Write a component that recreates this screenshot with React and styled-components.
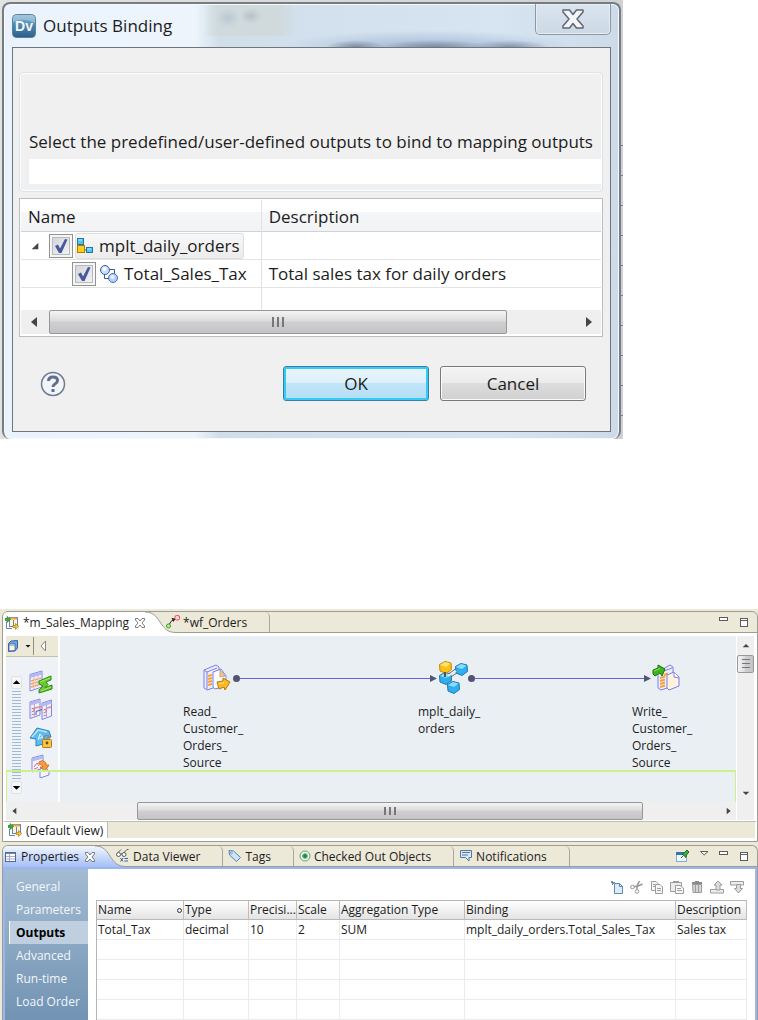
import React from 'react'
import styled, { createGlobalStyle, css } from 'styled-components'

const GlobalStyle = createGlobalStyle`
    *, *::before, *::after {
        box-sizing: border-box;
    }

    body {
        margin: 0;
        background: #ffffff;
        color: #1c1c1c;
        font-family: "Open Sans", "Noto Sans", sans-serif;
        font-size: 12px;
    }

    button, input {
        font: inherit;
        color: inherit;
        margin: 0;
    }

    button {
        padding: 0;
        border: 0;
        background: none;
    }

    svg {
        display: block;
        flex: none;
    }
`

const Page = styled.div`
    display: flex;
    flex-direction: column;
    gap: 170px;
    min-height: 100vh;
`

/* ---------- icons ---------- */

const DvIcon = () => (
    <svg width="24" height="24" viewBox="0 0 24 24" aria-hidden="true">
        <defs>
            <linearGradient id="dv" x1="0" y1="0" x2="0" y2="1">
                <stop offset="0" stopColor="#8dbbd8" />
                <stop offset="0.5" stopColor="#4a86b0" />
                <stop offset="1" stopColor="#2b5f8c" />
            </linearGradient>
        </defs>
        <rect x="0.5" y="0.5" width="23" height="23" rx="4" fill="url(#dv)" stroke="#5b8098" />
        <path d="M1 8Q12 3 23 9V4Q23 1 20 1H4Q1 1 1 4Z" fill="#b5d6ea" opacity="0.5" />
        <text x="12" y="17" textAnchor="middle" fontSize="14" fontWeight="700" fill="#f2f6f8" fontFamily="Liberation Sans, sans-serif">Dv</text>
    </svg>
)

const CrossIcon = () => (
    <svg width="24" height="22" viewBox="0 0 24 22" aria-hidden="true">
        <path d="M2 2H8.500L12 6.500 15.500 2H22V4L16 11 22 18V20H15.500L12 15.500 8.500 20H2V18L8 11 2 4Z" fill="#f5f5f5" stroke="#606577" strokeWidth="1.500" strokeLinejoin="round" />
    </svg>
)

const TabCloseIcon = () => (
    <svg width="10" height="10" viewBox="0 0 10 10" aria-hidden="true">
        <path d="M0.500 0.500H3L5 3 7 0.500H9.500V2L7 5 9.500 8V9.500H7L5 7 3 9.500H0.500V8L3 5 0.500 2Z" fill="#fff" stroke="#6c6c6c" strokeWidth="0.900" />
    </svg>
)

const MappletTreeIcon = () => (
    <svg width="16" height="16" viewBox="0 0 16 16" aria-hidden="true">
        <path d="M4 6V9M7 12H11" stroke="#555" />
        <rect x="0.500" y="0.500" width="6" height="6" fill="#4fc3f5" stroke="#1b77b0" />
        <rect x="0.500" y="7.500" width="7" height="7" fill="#ffcf1c" stroke="#b07c00" />
        <rect x="9.500" y="9.500" width="6" height="5" fill="#4fc3f5" stroke="#1b77b0" />
        <path d="M1.500 2H5M10.500 11H14" stroke="#c6ecff" />
    </svg>
)

const PortIcon = () => (
    <svg width="18" height="18" viewBox="0 0 18 18" aria-hidden="true">
        <path d="M9 4.500H14.500V9M4.500 10V13.500H9" fill="none" stroke="#3e5593" />
        <circle cx="5" cy="5" r="4.500" fill="#c9dcfb" stroke="#3c59a8" />
        <circle cx="13" cy="13" r="4.500" fill="#b3cffa" stroke="#4a6abb" />
        <circle cx="4.500" cy="4" r="2" fill="#fff" />
        <circle cx="12.500" cy="12" r="2" fill="#eef5ff" />
    </svg>
)

const HelpIcon = () => (
    <svg width="26" height="26" viewBox="0 0 26 26" aria-hidden="true">
        <circle cx="13" cy="13" r="11.500" fill="#f3f4f7" stroke="#6b7a95" strokeWidth="1.500" />
        <path d="M8.500 10Q8.500 6 13 6T17.500 9.500Q17.500 11.500 15 13 13 14.200 13 16" fill="none" stroke="#5f6f8c" strokeWidth="3" />
        <rect x="11.500" y="18" width="3" height="3" fill="#5f6f8c" />
    </svg>
)

const arrowPaths = {
    left: 'M8 1V11L2 6Z',
    right: 'M4 1V11L10 6Z',
    up: 'M1 8H11L6 3Z',
    down: 'M1 4H11L6 9Z',
    tree: 'M10 2V10H2Z'
}

const Arrow = ({ to, size = 8, fill = '#454545' }) => (
    <svg width={size} height={size} viewBox="0 0 12 12" aria-hidden="true">
        <path d={arrowPaths[to]} fill={fill} />
    </svg>
)

const MappingIcon = () => (
    <svg width="14" height="14" viewBox="0 0 14 14" aria-hidden="true">
        <rect x="4.500" y="1.500" width="8" height="9" fill="#fff6d8" stroke="#6784b8" />
        <path d="M5 2.500H12" stroke="#e7a93c" strokeWidth="2" />
        <path d="M8.500 4V10" stroke="#6784b8" />
        <path d="M1.500 6V12.500H7" fill="none" stroke="#6784b8" />
        <path d="M0 2.500H2V0.500L5.500 3.500 2 6.500V4.500H0Z" fill="#3fae2a" stroke="#217a18" strokeWidth="0.600" />
        <path d="M8 9.500H10.500V7.500L13.800 10.500 10.500 13.500V11.500H8Z" fill="#f5c431" stroke="#9c6b0b" strokeWidth="0.600" />
    </svg>
)

const WorkflowIcon = () => (
    <svg width="14" height="14" viewBox="0 0 14 14" aria-hidden="true">
        <path d="M3.500 9Q4 6 9 4" fill="none" stroke="#222" />
        <path d="M5.500 3L9.500 3.500 7.500 7Z" fill="#222" />
        <circle cx="2.500" cy="11" r="2" fill="#b8ee9c" stroke="#3d9a1f" />
        <rect x="9" y="0.500" width="4.500" height="4.500" rx="1.500" fill="#ffd3dc" stroke="#e4506a" />
    </svg>
)

const PaletteIcon = () => (
    <svg width="12" height="12" viewBox="0 0 12 12" aria-hidden="true">
        <path d="M1.500 3.500L4 1 10.500 0.500V8L8 11 1.500 11.500Z" fill="#6fa8de" stroke="#3567a8" />
        <path d="M2 4L8 3.500V10.500L2 11Z" fill="#fff8dc" stroke="#3567a8" strokeWidth="0.800" />
        <path d="M2 5H8" stroke="#5b95d3" />
    </svg>
)

const AggregatorIcon = () => (
    <svg width="24" height="24" viewBox="0 0 24 24" aria-hidden="true">
        <path d="M1 4.500L13 1V17L1 21Z" fill="#f2f3ff" stroke="#8286dc" />
        <path d="M1 6.500L13 3" stroke="#b4b8f4" strokeWidth="3" />
        <path d="M5 5V19M9 4V17" stroke="#a9adec" strokeWidth="0.700" />
        <path d="M2 11L12 8M2 14L12 11M2 17L12 14" stroke="#f7a445" strokeWidth="1.700" strokeDasharray="3 1" />
        <path d="M10 11L22 6V10L17 12 19 14.500 16 17.500 23 15V19L10 23V20L14 16 10 14Z" fill="#6cc82f" stroke="#2c8a16" />
        <path d="M11 12L21 8M12 21L22 17" stroke="#a6ea70" />
    </svg>
)

const JoinerIcon = () => (
    <svg width="24" height="24" viewBox="0 0 24 24" aria-hidden="true">
        <path d="M1 4L11 1V17L1 20.500Z" fill="#f0f1ff" stroke="#8286dc" />
        <path d="M13 5L22.500 2V18L13 21.500Z" fill="#f0f1ff" stroke="#8286dc" />
        <path d="M1 6L11 3M13 7L22.500 4" stroke="#b4b8f4" strokeWidth="3" />
        <path d="M5.500 6V18M17.500 6V19" stroke="#a9adec" />
        <path d="M2.500 11L5 10V13L2.500 14M2.500 17L5 16M14.500 12L17 11V14L14.500 15M14.500 18L17 17" fill="none" stroke="#d76d6d" />
        <path d="M6 10L13 8.500M18 10L22 9" stroke="#e78b8b" strokeWidth="1.500" />
        <path d="M7 13.500L13 11.500M7 13.500V17" stroke="#555a9c" fill="none" />
    </svg>
)

const LockIcon = () => (
    <svg width="24" height="24" viewBox="0 0 24 24" aria-hidden="true">
        <path d="M1 12L8 2 20 5 22 11 18 12V17L7 20V13Z" fill="#5bbcf0" stroke="#2f83bf" />
        <path d="M3 11L9 4 18 6" fill="none" stroke="#b8e4fb" strokeWidth="1.500" />
        <path d="M9 14L11 8 14 12M10 12H13" fill="none" stroke="#eef9ff" />
        <path d="M15 14V12Q15 9.500 17.500 9.500T20 12V14" fill="none" stroke="#8b8b8b" strokeWidth="1.500" />
        <rect x="13.500" y="13.500" width="9" height="8" rx="1" fill="#f9c44a" stroke="#b57a12" />
        <circle cx="18" cy="17" r="1.400" fill="#6d4a0a" />
    </svg>
)

const FilterIcon = () => (
    <svg width="24" height="24" viewBox="0 0 24 24" aria-hidden="true">
        <path d="M3 4L14 1V14L3 18Z" fill="#f4f5ff" stroke="#8286dc" />
        <path d="M3 6L14 3" stroke="#b4b8f4" strokeWidth="3" />
        <path d="M5 13L8 9 10 12M5 15L9 13.500" fill="none" stroke="#d76d6d" />
        <path d="M11 15L16 13 20 17V21L11 24Z" fill="#f6f7ff" stroke="#8286dc" />
        <path d="M10 8Q14 5 17 9V11H20L16 17 11 13H14Q13 10 10 10Z" fill="#f79a3b" stroke="#c76413" strokeWidth="0.800" />
    </svg>
)

const ReadIcon = () => (
    <svg width="28" height="28" viewBox="0 0 28 28" aria-hidden="true">
        <path d="M1 6L13 1 16 3V22L4 26 1 24Z" fill="#eceeff" stroke="#7b7fe4" />
        <path d="M4 8L14 4M4 8V25M1 6L4 8" fill="none" stroke="#7b7fe4" />
        <path d="M5 12L9 11M5 15L9 14M5 18L9 17M5 21L9 20" stroke="#f7a23c" strokeWidth="2" />
        <path d="M10 8L18 5 23 12V22L12 25 10 23Z" fill="#fbfbff" stroke="#7b7fe4" />
        <path d="M17 6L22 12 17 13Z" fill="#f3c98c" stroke="#b99a78" strokeWidth="0.800" />
        <path d="M14 18L20 17V14L27 18 22 26 21 23 16 25Z" fill="#fdbb22" stroke="#b87908" />
        <path d="M16 20L21 18.500" stroke="#ffe48a" />
    </svg>
)

const WriteIcon = () => (
    <svg width="28" height="28" viewBox="0 0 28 28" aria-hidden="true">
        <path d="M6 8L18 1 21 3V22L9 26 6 24Z" fill="#eceeff" stroke="#7b7fe4" />
        <path d="M12 7L20 4" stroke="#7b7fe4" />
        <path d="M8 14L13 12.500M8 17L13 15.500M8 20L13 18.500M8 23L13 21.500M12 11L16 9.500" stroke="#f7a23c" strokeWidth="2" />
        <path d="M15 11L22 8 27 13V22L17 26 15 24Z" fill="#fff3df" stroke="#7b7fe4" />
        <path d="M22 8V13L27 14" fill="#fff" stroke="#7b7fe4" />
        <path d="M1 6L6 4V1L13 5 10 12 8 9 3 12 1 10Z" fill="#3cb51e" stroke="#1f7410" />
        <path d="M2 7L8 4.500" stroke="#8be66a" />
    </svg>
)

const Cube = ({ x, y, light, mid, line }) => (
    <g transform={`translate(${x} ${y})`}>
        <path d="M0.500 3.500L6 0.500 12 2 12.500 8.500 7 12.500 1 10Z" fill={mid} stroke={line} />
        <path d="M1 4L6 1 11.500 2.500 7 6Z" fill={light} />
    </g>
)

const MappletIcon = () => (
    <svg width="32" height="36" viewBox="0 0 32 36" aria-hidden="true">
        <path d="M8 18L21 9M7 18L15 27" stroke="#777" strokeWidth="5" />
        <path d="M8 18L21 9M7 18L15 27" stroke="#ececec" strokeWidth="3" />
        <Cube x={1} y={12} light="#8adcff" mid="#2fb0ee" line="#1c78b8" />
        <Cube x={1} y={1} light="#ffe36a" mid="#fcc116" line="#c48a08" />
        <Cube x={17} y={3} light="#8adcff" mid="#2fb0ee" line="#1c78b8" />
        <Cube x={9} y={21} light="#8adcff" mid="#2fb0ee" line="#1c78b8" />
        <path d="M7 12V17" stroke="#555" strokeWidth="2" />
        <path d="M10 16L18 11" stroke="#ececec" strokeWidth="2" />
    </svg>
)

const MinimizeIcon = () => (
    <svg width="10" height="12" viewBox="0 0 10 12" aria-hidden="true">
        <rect x="0.500" y="1.500" width="8" height="3" fill="#fff" stroke="#5c5c5c" />
    </svg>
)

const MaximizeIcon = () => (
    <svg width="10" height="12" viewBox="0 0 10 12" aria-hidden="true">
        <rect x="1.500" y="2.500" width="7" height="8" fill="#fff" stroke="#5c5c5c" />
        <path d="M1 4.500H9" stroke="#5c5c5c" />
    </svg>
)

const MenuIcon = () => (
    <svg width="9" height="12" viewBox="0 0 9 12" aria-hidden="true">
        <path d="M0.500 1.500H8L4.200 5Z" fill="#fff" stroke="#5c5c5c" />
    </svg>
)

const PinIcon = () => (
    <svg width="14" height="14" viewBox="0 0 14 14" aria-hidden="true">
        <rect x="0.500" y="3.500" width="10" height="9" fill="#f1f8ff" stroke="#7fb0d0" />
        <path d="M0 4.500H8" stroke="#2f78ac" strokeWidth="3" />
        <path d="M5 9L7 7" stroke="#555" />
        <path d="M6 5L8 4 11 1 13 3 10.500 6 10 8.500Z" fill="#43a845" stroke="#1f6d25" />
    </svg>
)

const PropertiesIcon = () => (
    <svg width="12" height="12" viewBox="0 0 12 12" aria-hidden="true">
        <rect x="0.500" y="1.500" width="10" height="9" fill="#fff" stroke="#56678c" />
        <path d="M1 2.500H10" stroke="#6f86b5" />
        <path d="M1 5.500H10M1 8H10M4.500 3V10" stroke="#8d9cbf" strokeWidth="0.800" />
    </svg>
)

const GlassesIcon = () => (
    <svg width="14" height="14" viewBox="0 0 14 14" aria-hidden="true">
        <circle cx="2.500" cy="5.500" r="2" fill="#fff" stroke="#5b5b5b" />
        <circle cx="8" cy="5.500" r="2" fill="#fff" stroke="#5b5b5b" />
        <path d="M2 3.500L5 0.500M8 3.500L11 0.500H12.500M4.500 5H6" fill="none" stroke="#5b5b5b" />
        <path d="M4.500 9L7 12.500M7 9L4.500 12.500M8.500 9.500H12M8.500 12H12" stroke="#35609b" />
    </svg>
)

const TagIcon = () => (
    <svg width="14" height="14" viewBox="0 0 14 14" aria-hidden="true">
        <path d="M1 1.500L5.500 2 12.500 8.500 8.500 12.500 1.500 6Z" fill="#cfe4f8" stroke="#4b86b8" />
        <circle cx="3.300" cy="4" r="1" fill="#fff" stroke="#4b86b8" strokeWidth="0.700" />
    </svg>
)

const TargetIcon = () => (
    <svg width="12" height="14" viewBox="0 0 12 14" aria-hidden="true">
        <circle cx="6" cy="7" r="5" fill="#f1faef" stroke="#5fa774" />
        <circle cx="6" cy="7" r="2.500" fill="#2d8048" stroke="#7fc794" />
    </svg>
)

const NoteIcon = () => (
    <svg width="14" height="14" viewBox="0 0 14 14" aria-hidden="true">
        <path d="M1.500 1.500H12.500V8.500H10V12L6.500 8.500H1.500Z" fill="#dbe9f8" stroke="#55789f" />
        <path d="M3 3.500H11M3 6H9" stroke="#55789f" />
    </svg>
)

const NewIcon = () => (
    <svg width="14" height="14" viewBox="0 0 14 14" aria-hidden="true">
        <path d="M4.500 3.500H9.500L12.500 6.500V13.500H4.500Z" fill="#dcecfb" stroke="#5b88b5" />
        <path d="M9.500 3.500V6.500H12.500" fill="none" stroke="#5b88b5" />
        <path d="M2.500 1V5M1 2.500H5M1 1L4 4" stroke="#4776a4" strokeWidth="0.800" />
    </svg>
)

const CutIcon = () => (
    <svg width="14" height="14" viewBox="0 0 14 14" aria-hidden="true">
        <path d="M4 6.500H7L12.500 4M7 9.500V6L9.500 1" fill="none" stroke="#979797" strokeWidth="1.500" />
        <circle cx="2.500" cy="7" r="1.800" fill="none" stroke="#979797" />
        <circle cx="7" cy="11.500" r="1.800" fill="none" stroke="#979797" />
    </svg>
)

const CopyIcon = () => (
    <svg width="14" height="14" viewBox="0 0 14 14" aria-hidden="true">
        <path d="M1.500 1.500H6L8.500 4V10.500H1.500Z" fill="#f6f6f6" stroke="#9c9c9c" />
        <path d="M5.500 4.500H10L12.500 7V13.500H5.500Z" fill="#f6f6f6" stroke="#9c9c9c" />
        <path d="M3 4.500H5M3 6.500H5M7 8.500H11M7 10.500H11" stroke="#9c9c9c" />
    </svg>
)

const PasteIcon = () => (
    <svg width="14" height="14" viewBox="0 0 14 14" aria-hidden="true">
        <path d="M0.500 2.500H11.500V11.500H0.500Z" fill="#ececec" stroke="#9c9c9c" />
        <path d="M3 2H9" stroke="#9c9c9c" strokeWidth="2" />
        <path d="M5.500 5.500H10L13.500 8V13.500H5.500Z" fill="#f9f9f9" stroke="#9c9c9c" />
        <path d="M7 8.500H11M7 10.500H12" stroke="#9c9c9c" />
    </svg>
)

const TrashIcon = () => (
    <svg width="14" height="14" viewBox="0 0 14 14" aria-hidden="true">
        <path d="M2 3H12" stroke="#8a8a8a" strokeWidth="2" />
        <path d="M5 1.500H9" stroke="#8a8a8a" />
        <path d="M2.500 4.500H11.500V12.500H3Z" fill="#d6d6d6" stroke="#9c9c9c" />
        <path d="M5.500 5V12M8.500 5V12" stroke="#9c9c9c" />
    </svg>
)

const MoveUpIcon = () => (
    <svg width="14" height="14" viewBox="0 0 14 14" aria-hidden="true">
        <path d="M0.500 9.500H13.500V13H0.500Z" fill="#ededed" stroke="#9c9c9c" />
        <path d="M8 1L12 5H10V10H6V5H4Z" fill="#dcdcdc" stroke="#9c9c9c" />
    </svg>
)

const MoveDownIcon = () => (
    <svg width="14" height="14" viewBox="0 0 14 14" aria-hidden="true">
        <path d="M0.500 1.500H13.500V5H0.500Z" fill="#ededed" stroke="#9c9c9c" />
        <path d="M6.500 4.500H10.500V8.500H12.500L8.500 13 4.500 8.500H6.500Z" fill="#dcdcdc" stroke="#9c9c9c" />
    </svg>
)

const CheckMark = styled.svg.attrs({ width: 16, height: 18, viewBox: '0 0 16 18', 'aria-hidden': true })`
    grid-area: 1 / 1;
    pointer-events: none;
`

/* ---------- scrollbars ---------- */

const ScrollTrack = styled.div`
    display: flex;
    align-items: stretch;
    flex: none;
    height: ${({ $size }) => $size}px;
    background: #efefef;
`

const ScrollEnd = styled.span`
    display: flex;
    flex: 0 0 ${({ $length }) => $length}px;
    align-items: center;
    justify-content: center;
`

const ScrollSpace = styled.span`
    flex: ${({ $grow }) => $grow} 1 0;
`

const Thumb = styled.span`
    display: flex;
    flex: ${({ $grow }) => $grow} 1 0;
    align-items: center;
    justify-content: center;
    gap: 3px;
    border: 1px solid #979797;
    border-radius: 2px;
    background: linear-gradient(${({ $vertical }) => $vertical ? '90deg' : '180deg'}, #f4f4f4, #dcdcdc 45%, #cfcfd1 50%, #c4c4c6);
    ${({ $vertical }) => $vertical && css`flex-direction: column;`}
`

const Grip = styled.i`
    width: ${({ $vertical }) => $vertical ? 8 : 2}px;
    height: ${({ $vertical, $length = 8 }) => $vertical ? 1 : $length}px;
    background: #77777a;
`

const HScroll = ({ size, end, before, thumb, after, grip }) => (
    <ScrollTrack $size={size} aria-hidden="true">
        <ScrollEnd $length={end}><Arrow to="left" size={size > 20 ? 12 : 8} /></ScrollEnd>
        <ScrollSpace $grow={before} />
        <Thumb $grow={thumb}>
            <Grip $length={grip} /><Grip $length={grip} /><Grip $length={grip} />
        </Thumb>
        <ScrollSpace $grow={after} />
        <ScrollEnd $length={end}><Arrow to="right" size={size > 20 ? 12 : 8} /></ScrollEnd>
    </ScrollTrack>
)

/* ---------- dialog ---------- */

const Backdrop = styled.div`
    width: 100%;
    max-width: 623px;
    padding: 2px 2px 0 2px;
    overflow: hidden;
    background:
        repeating-linear-gradient(180deg, transparent 0 25px, #7479c0 25px 26px, transparent 26px 30px) right 120px / 3px 100% no-repeat,
        linear-gradient(90deg, #e2e2df, #cfd1d2);
`

const Window = styled.section`
    display: flex;
    flex-direction: column;
    height: 437px;
    padding: 0 8px 7px 8px;
    border: 2px solid #757c83;
    border-bottom: 0;
    border-radius: 8px;
    box-shadow: inset 0 0 0 1px #f5faff;
    font-size: 17px;
    background:
        radial-gradient(ellipse closest-side, #bac9d2, transparent) 212px 4px / 24px 20px no-repeat,
        radial-gradient(ellipse closest-side, #b9c2c6, transparent) 236px 4px / 22px 16px no-repeat,
        radial-gradient(ellipse closest-side, #7b8ca3, transparent) 322px 36px / 60px 14px no-repeat,
        radial-gradient(ellipse closest-side, #7b8ca3, transparent) 375px 36px / 110px 14px no-repeat,
        radial-gradient(ellipse closest-side, #8395ac, transparent) 465px 36px / 80px 14px no-repeat,
        radial-gradient(ellipse closest-side, #a4b8d4, transparent) 280px 26px / 290px 34px no-repeat,
        linear-gradient(90deg, transparent, #d0dadd 14px 76px, transparent) 200px 0 / 92px 32px no-repeat,
        linear-gradient(90deg, #eaf3fd, #edf4fc 31%, #d0deea 35%, #d7e5f3 80%, #cddbe9);
`

const TitleBar = styled.header`
    display: flex;
    align-items: flex-start;
    height: 43px;
`

const Title = styled.h1`
    display: flex;
    align-items: center;
    gap: 7px;
    flex: 1;
    margin: 0;
    height: 43px;
    font-size: 17px;
    font-weight: 400;
`

const WindowClose = styled.button`
    display: flex;
    align-items: center;
    justify-content: center;
    width: 76px;
    height: 31px;
    border: 1px solid #8d98a3;
    border-top: 0;
    border-radius: 0 0 5px 5px;
    background: linear-gradient(#dae5f0, #ccd8e4);
    box-shadow: inset 0 0 0 1px #e6eef5;
`

const Client = styled.div`
    display: flex;
    flex-direction: column;
    flex: 1;
    padding: 24px 7px 0 6px;
    border: 1px solid #70757a;
    background: #f0f0f0;
`

const Group = styled.div`
    display: flex;
    flex-direction: column;
    justify-content: flex-end;
    height: 120px;
    padding: 0 0 7px 9px;
    border: 1px solid #dbe3ea;
    border-radius: 4px;
    box-shadow: inset 0 0 0 1px #fafcfd;
`

const FieldLabel = styled.label`
    line-height: 24px;
    margin-bottom: 5px;
    white-space: nowrap;
`

const Input = styled.input`
    width: 100%;
    height: 25px;
    padding: 0 4px;
    border: 0;
    background: #ffffff;
`

const TreeBox = styled.div`
    margin-top: 6px;
    padding: 1px 1px 2px 1px;
    border: 1px solid #babdc2;
    background: #ffffff;
`

const Tree = styled.table`
    width: 100%;
    border-spacing: 0;
    table-layout: fixed;
    line-height: 22px;

    th, td {
        padding: 0 0 0 7px;
        border-bottom: 1px solid #e3e3e3;
        text-align: left;
        font-weight: 400;
        white-space: nowrap;
    }

    th {
        height: 32px;
        padding-top: 3px;
        border-bottom-color: #cfd2d6;
        background: linear-gradient(#ffffff 40%, #f4f6f8 40%, #f2f3f5);
    }

    th:first-child, td:first-child {
        border-right: 1px solid #e0e1e3;
    }

    td {
        height: 28px;
    }

    tr:last-child td {
        height: 22px;
        border-bottom: 0;
    }
`

const NameCell = styled.div`
    display: flex;
    align-items: center;
    gap: 2px;
    padding-left: ${({ $level }) => $level ? 44 : 1}px;
`

const Twisty = styled.button`
    display: flex;
    justify-content: center;
    width: 12px;
    margin-right: 6px;
`

const TreeLabel = styled.label`
    display: flex;
    align-items: center;
    gap: 6px;
    height: 26px;
    padding: 0 3px 0 1px;
    border: 1px solid ${({ $selected }) => $selected ? '#dedede' : 'transparent'};
    border-radius: 3px;
    background: ${({ $selected }) => $selected ? 'linear-gradient(#f8f8f8, #ececec)' : 'none'};
`

const CheckWrap = styled.span`
    display: inline-grid;
    place-items: center;
`

const CheckInput = styled.input`
    grid-area: 1 / 1;
    appearance: none;
    width: 24px;
    height: 24px;
    border: 1px solid #92928f;
    background: linear-gradient(135deg, #cdd1d8, #f6f7f8);
    box-shadow: inset 0 0 0 2px #f6f6f6, inset 0 0 0 3px #b6babf;
`

const DialogFooter = styled.footer`
    display: flex;
    align-items: center;
    gap: 11px;
    margin: 29px 17px 0 21px;
`

const HelpButton = styled.button`
    margin-right: auto;
`

const DialogButton = styled.button`
    width: 146px;
    height: 35px;
    border: 1px solid ${({ $primary }) => $primary ? '#3b7fa3' : '#77797b'};
    border-radius: 3px;
    background: ${({ $primary }) => $primary
        ? 'linear-gradient(#e9f6fd, #dcf0fc 48%, #c1e5f9 50%, #b3def5)'
        : 'linear-gradient(#f3f3f3, #ebebeb 48%, #dddddd 50%, #d0d0d0)'};
    box-shadow: inset 0 0 0 ${({ $primary }) => $primary ? '2px #35cbf7' : '1px #fafafa'};
`

const TreeCheck = ({ id }) => (
    <CheckWrap>
        <CheckInput type="checkbox" id={id} defaultChecked />
        <CheckMark>
            <path d="M2 9L5 7.500 7 11.500 12 2 14.500 2.500 8.500 16H6Z" fill="#47589b" />
        </CheckMark>
    </CheckWrap>
)

const OutputsDialog = () => (
    <Backdrop>
        <Window role="dialog" aria-labelledby="dialog-title">
            <TitleBar>
                <Title id="dialog-title"><DvIcon />Outputs Binding</Title>
                <WindowClose aria-label="Close"><CrossIcon /></WindowClose>
            </TitleBar>
            <Client>
                <Group>
                    <FieldLabel htmlFor="filter">Select the predefined/user-defined outputs to bind to mapping outputs</FieldLabel>
                    <Input id="filter" type="text" />
                </Group>
                <TreeBox>
                    <Tree>
                        <colgroup>
                            <col style={{ width: '41.5%' }} />
                            <col />
                        </colgroup>
                        <thead>
                            <tr><th>Name</th><th>Description</th></tr>
                        </thead>
                        <tbody>
                            <tr>
                                <td>
                                    <NameCell>
                                        <Twisty aria-label="Collapse"><Arrow to="tree" size={10} /></Twisty>
                                        <TreeCheck id="mapplet" />
                                        <TreeLabel htmlFor="mapplet" $selected><MappletTreeIcon />mplt_daily_orders</TreeLabel>
                                    </NameCell>
                                </td>
                                <td />
                            </tr>
                            <tr>
                                <td>
                                    <NameCell $level={1}>
                                        <TreeCheck id="tax" />
                                        <TreeLabel htmlFor="tax"><PortIcon />Total_Sales_Tax</TreeLabel>
                                    </NameCell>
                                </td>
                                <td>Total sales tax for daily orders</td>
                            </tr>
                            <tr><td /><td /></tr>
                        </tbody>
                    </Tree>
                    <HScroll size={24} end={27} before={1} thumb={459} after={68} grip={10} />
                </TreeBox>
                <DialogFooter>
                    <HelpButton aria-label="Help"><HelpIcon /></HelpButton>
                    <DialogButton $primary>OK</DialogButton>
                    <DialogButton>Cancel</DialogButton>
                </DialogFooter>
            </Client>
        </Window>
    </Backdrop>
)

/* ---------- workbench ---------- */

const Workbench = styled.main`
    display: flex;
    flex-direction: column;
    flex: 1;
    gap: 3px;
    padding: 2px 0 0 2px;
    background: #ece9d8;
`

const Panel = styled.section`
    display: flex;
    flex-direction: column;
    border: 1px solid #9d9d96;
    border-radius: 6px 6px 0 0;
    ${({ $fill }) => $fill && css`flex: 1; border-bottom: 0;`}
`

const TabBar = styled.div`
    display: flex;
    align-items: stretch;
    height: 21px;
    border-bottom: 1px solid #9d9d96;
`

const Tab = styled.button`
    display: flex;
    align-items: center;
    gap: 3px;
    padding: 0 22px 0 5px;
    border-right: 1px solid #a7a79f;
    border-top-right-radius: 5px;
    white-space: nowrap;
`

const ActiveTab = styled.div`
    display: flex;
    align-items: stretch;
    height: 21px;
    margin-right: -15px;
    border-top-left-radius: 5px;

    > div {
        display: flex;
        align-items: center;
        gap: 4px;
        padding-left: 2px;
        border-top-left-radius: 5px;
        background: ${({ $blue }) => $blue ? 'linear-gradient(#f2f7fe, #a3bff6)' : '#ffffff'};
    }
`

const TabClose = styled.button`
    margin-left: 2px;
`

const TabCurve = ({ blue }) => (
    <svg width="31" height="21" viewBox="0 0 31 21" aria-hidden="true">
        <defs>
            <linearGradient id="tabBlue" x1="0" y1="0" x2="0" y2="1">
                <stop offset="0" stopColor="#f2f7fe" />
                <stop offset="1" stopColor="#a3bff6" />
            </linearGradient>
        </defs>
        <path d="M0 0C8 0 11 4 15 10 19 16 22 20.500 31 20.500V21H0Z" fill={blue ? 'url(#tabBlue)' : '#ffffff'} />
        <path d="M0 0C8 0 11 4 15 10 19 16 22 20.500 31 20.500" fill="none" stroke="#9d9d96" />
    </svg>
)

const PanelTools = styled.div`
    display: flex;
    align-items: center;
    gap: 10px;
    margin-left: auto;
    padding-right: 8px;
`

const EditorBody = styled.div`
    display: flex;
    padding: 3px 3px 1px 3px;
    background: #ffffff;
`

const EditorMain = styled.div`
    display: flex;
    flex: 1;
    flex-direction: column;
    min-width: 0;
`

const Viewport = styled.div`
    position: relative;
    display: flex;
    gap: 2px;
    height: 166px;
`

const DropArea = styled.div`
    position: absolute;
    left: 0;
    right: 0;
    bottom: 0;
    height: 32px;
    border: 1px solid #cdf08e;
    border-width: 2px 1px 0 1px;
`

const Palette = styled.div`
    flex: 0 0 52px;
    background: #eef2f6;
`

const PaletteBar = styled.div`
    display: flex;
    align-items: center;
    height: 21px;
    padding-left: 1px;
    background: #ece9d8;
    border-bottom: 1px solid #c3c0b0;
`

const PaletteMenu = styled.button`
    display: flex;
    align-items: center;
    gap: 6px;
    height: 18px;
    padding-right: 2px;
    border-right: 1px solid #8f8f88;
    margin-right: 6px;
`

const PaletteTools = styled.div`
    display: flex;
    gap: 7px;
    padding: 13px 0 0 5px;
`

const PaletteSlider = styled.div`
    display: flex;
    flex-direction: column;
    justify-content: space-between;
    width: 11px;
    height: 118px;
    margin-top: 6px;
    background: repeating-linear-gradient(180deg, #9fb9d6 0 1px, #eef3f8 1px 3px) 1px 15px / 9px 88px no-repeat;
`

const SliderEnd = styled.span`
    display: grid;
    place-items: center;
    height: 13px;
    border: 1px solid #dde0e4;
    border-radius: 2px;
    background: #f6f6f6;
`

const PaletteList = styled.div`
    display: flex;
    flex-direction: column;
    gap: 4px;
`

const Canvas = styled.div`
    position: relative;
    flex: 1;
    overflow: hidden;
    background: #e9eff3;
`

const Links = styled.svg`
    position: absolute;
    inset: 0;
`

const Node = styled.div`
    position: absolute;
    left: ${({ $x }) => $x}px;
    top: 24px;
    line-height: 17px;
`

const NodeIcon = styled.div`
    display: flex;
    align-items: center;
    height: 36px;
    margin-bottom: 7px;
    padding-left: 20px;
`

const ScrollColumn = styled.div`
    display: flex;
    flex-direction: column;
    flex: 0 0 18px;
    padding-bottom: 18px;
    background: #efefef;
    border-left: 1px solid #ffffff;
`

const ViewBar = styled.div`
    display: flex;
    height: 20px;
    border: solid #ffffff;
    border-width: 0 2px 3px 2px;
    border-top: 1px solid #bdbdb6;
`

const ViewTab = styled.button`
    display: flex;
    align-items: center;
    gap: 4px;
    padding: 0 4px 0 3px;
    border-right: 1px solid #bdbdb6;
    background: #ffffff;
`

const nodes = [
    { x: 123, icon: <ReadIcon />, label: ['Read_', 'Customer_', 'Orders_', 'Source'] },
    { x: 358, icon: <MappletIcon />, label: ['mplt_daily_', 'orders'] },
    { x: 572, icon: <WriteIcon />, label: ['Write_', 'Customer_', 'Orders_', 'Source'] }
]

const tools = [
    ['Aggregator', <AggregatorIcon />],
    ['Joiner', <JoinerIcon />],
    ['Lock', <LockIcon />],
    ['Filter', <FilterIcon />]
]

const MappingEditor = () => (
    <Panel>
        <TabBar role="tablist">
            <ActiveTab>
                <div role="tab" aria-selected="true">
                    <MappingIcon />*m_Sales_Mapping
                    <TabClose aria-label="Close tab"><TabCloseIcon /></TabClose>
                </div>
                <TabCurve />
            </ActiveTab>
            <Tab role="tab"><WorkflowIcon />*wf_Orders</Tab>
            <PanelTools>
                <button aria-label="Minimize"><MinimizeIcon /></button>
                <button aria-label="Maximize"><MaximizeIcon /></button>
            </PanelTools>
        </TabBar>
        <EditorBody>
            <EditorMain>
                <Viewport>
                    <Palette>
                        <PaletteBar>
                            <PaletteMenu aria-label="Palette menu"><PaletteIcon /><Arrow to="down" size={6} fill="#111" /></PaletteMenu>
                            <button aria-label="Collapse palette">
                                <svg width="7" height="12" viewBox="0 0 7 12" aria-hidden="true">
                                    <path d="M5.500 1V11L1 6Z" fill="#fff" stroke="#888" />
                                </svg>
                            </button>
                        </PaletteBar>
                        <PaletteTools>
                            <PaletteSlider aria-hidden="true">
                                <SliderEnd><Arrow to="up" size={9} fill="#000" /></SliderEnd>
                                <SliderEnd><Arrow to="down" size={9} fill="#000" /></SliderEnd>
                            </PaletteSlider>
                            <PaletteList>
                                {tools.map(([name, icon]) => <button key={name} aria-label={name}>{icon}</button>)}
                            </PaletteList>
                        </PaletteTools>
                    </Palette>
                    <Canvas>
                        <Links width="100%" height="100%" aria-hidden="true">
                            <path d="M176 42.500H371M412 42.500H585" stroke="#6464d8" />
                            <circle cx="176.500" cy="42.500" r="3.500" fill="#535373" />
                            <circle cx="411.500" cy="42.500" r="3.500" fill="#535373" />
                            <path d="M370 39L377 42.500 370 46ZM584 39L591 42.500 584 46Z" fill="#535373" />
                        </Links>
                        {nodes.map(({ x, icon, label }) => (
                            <Node key={x} $x={x}>
                                <NodeIcon>{icon}</NodeIcon>
                                {label.map(line => <div key={line}>{line}</div>)}
                            </Node>
                        ))}
                    </Canvas>
                    <DropArea />
                </Viewport>
                <HScroll size={18} end={17} before={114} thumb={507} after={76} grip={8} />
            </EditorMain>
            <ScrollColumn aria-hidden="true">
                <ScrollEnd $length={19}><Arrow to="up" /></ScrollEnd>
                <Thumb $vertical $grow={16}><Grip $vertical /><Grip $vertical /><Grip $vertical /></Thumb>
                <ScrollSpace $grow={112} />
                <ScrollEnd $length={19}><Arrow to="down" /></ScrollEnd>
            </ScrollColumn>
        </EditorBody>
        <ViewBar>
            <ViewTab><MappingIcon />(Default View)</ViewTab>
        </ViewBar>
    </Panel>
)

/* ---------- properties ---------- */

const PropertiesBody = styled.div`
    display: flex;
    flex: 1;
    border: solid #9ab6f2;
    border-width: 2px 2px 0 2px;
    background: #ffffff;
`

const SideNav = styled.nav`
    display: flex;
    flex-direction: column;
    flex: 0 0 83px;
    padding: 6px 0 0 4px;
    background: linear-gradient(#a3bbd2, #7293b3);
`

const SideItem = styled.button`
    height: 23px;
    padding-left: 6px;
    text-align: left;
    color: #f2f6fa;
    border-left: 1px solid transparent;
    ${({ $active }) => $active && css`
        color: #000000;
        font-weight: 700;
        border-color: #ffffff;
        background: #bfcfe0;
    `}
`

const Content = styled.div`
    flex: 1;
    min-width: 0;
    padding: 9px 8px 0 8px;
`

const Toolbar = styled.div`
    display: flex;
    justify-content: flex-end;
    align-items: center;
    gap: 6px;
    height: 18px;
    margin-bottom: 4px;
    padding-right: 3px;
`

const DataTable = styled.table`
    width: 100%;
    table-layout: fixed;
    border-spacing: 0;
    border-left: 1px solid #b5b5b5;
    line-height: 16px;

    th, td {
        height: 20px;
        padding: 0 0 0 1px;
        text-align: left;
        font-weight: 400;
        white-space: nowrap;
        border-right: 1px solid #ebebeb;
        border-bottom: 1px solid #ebebeb;
    }

    th {
        border-top: 1px solid #b5b5b5;
        border-bottom-color: #b9b9b9;
        border-right-color: #bdbdbd;
        background: linear-gradient(#ffffff, #e4e4e4);
    }
`

const SortHead = styled.span`
    display: flex;
    align-items: center;
    justify-content: space-between;
    padding-right: 1px;
`

const SortDot = styled.i`
    width: 5px;
    height: 5px;
    border: 1px solid #333333;
    border-radius: 50%;
`

const sections = ['General', 'Parameters', 'Outputs', 'Advanced', 'Run-time', 'Load Order']

const actions = [
    ['New', <NewIcon />],
    ['Cut', <CutIcon />],
    ['Copy', <CopyIcon />],
    ['Paste', <PasteIcon />],
    ['Delete', <TrashIcon />],
    ['Move up', <MoveUpIcon />],
    ['Move down', <MoveDownIcon />]
]

const columns = [
    { name: 'Name', width: '87px' },
    { name: 'Type', width: '65px' },
    { name: 'Precisi...', width: '48px' },
    { name: 'Scale', width: '43px' },
    { name: 'Aggregation Type', width: '125px' },
    { name: 'Binding', width: 'auto' },
    { name: 'Description', width: '71px' }
]

const rows = [
    ['Total_Tax', 'decimal', '10', '2', 'SUM', 'mplt_daily_orders.Total_Sales_Tax', 'Sales tax'],
    [], [], [], []
]

const Properties = () => (
    <Panel $fill>
        <TabBar role="tablist">
            <ActiveTab $blue>
                <div role="tab" aria-selected="true">
                    <PropertiesIcon />Properties
                    <TabClose aria-label="Close tab"><TabCloseIcon /></TabClose>
                </div>
                <TabCurve blue />
            </ActiveTab>
            <Tab role="tab"><GlassesIcon />Data Viewer</Tab>
            <Tab role="tab"><TagIcon />Tags</Tab>
            <Tab role="tab"><TargetIcon />Checked Out Objects</Tab>
            <Tab role="tab"><NoteIcon />Notifications</Tab>
            <PanelTools>
                <button aria-label="Pin"><PinIcon /></button>
                <button aria-label="View menu"><MenuIcon /></button>
                <button aria-label="Minimize"><MinimizeIcon /></button>
                <button aria-label="Maximize"><MaximizeIcon /></button>
            </PanelTools>
        </TabBar>
        <PropertiesBody>
            <SideNav>
                {sections.map(name => <SideItem key={name} $active={name === 'Outputs'}>{name}</SideItem>)}
            </SideNav>
            <Content>
                <Toolbar>
                    {actions.map(([name, icon]) => <button key={name} aria-label={name}>{icon}</button>)}
                </Toolbar>
                <DataTable>
                    <colgroup>
                        {columns.map(({ name, width }) => <col key={name} style={{ width }} />)}
                    </colgroup>
                    <thead>
                        <tr>
                            {columns.map(({ name }, i) => (
                                <th key={name}>{i === 0 ? <SortHead>{name}<SortDot /></SortHead> : name}</th>
                            ))}
                        </tr>
                    </thead>
                    <tbody>
                        {rows.map((row, i) => (
                            <tr key={i}>
                                {columns.map(({ name }, j) => <td key={name}>{row[j]}</td>)}
                            </tr>
                        ))}
                    </tbody>
                </DataTable>
            </Content>
        </PropertiesBody>
    </Panel>
)

const App = () => (
    <>
        <GlobalStyle />
        <Page>
            <OutputsDialog />
            <Workbench>
                <MappingEditor />
                <Properties />
            </Workbench>
        </Page>
    </>
)

export default App
